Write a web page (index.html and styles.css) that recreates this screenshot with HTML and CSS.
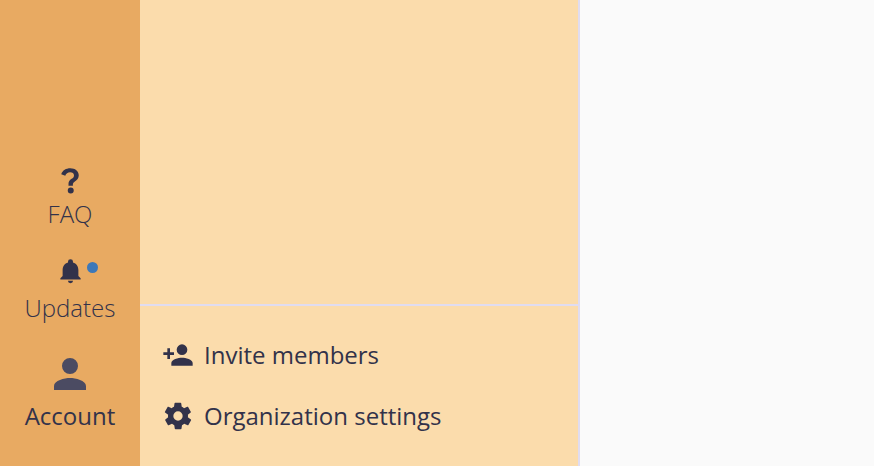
FILE: index.html
```html
<!DOCTYPE html>
<html lang="en">
<head>
<meta charset="utf-8">
<title>Organization menu</title>
<link rel="stylesheet" href="styles.css">
</head>
<body>
<div class="app">
  <nav class="rail">
    <a class="rail-item faq">
      <svg viewBox="0 0 24 24" width="30" height="30"><path class="ink" d="M10.800 16.600h3.500v-1c0-1 .4-1.600 1.600-2.400 1.800-1.200 3.100-2.600 3.100-5 0-3.500-2.900-5.700-6.800-5.700-3.300 0-6.200 1.600-7.200 4.800l3.200 1.300c.6-1.800 2-2.800 3.900-2.800 1.800 0 3.100 1 3.100 2.500 0 1.200-.7 1.900-1.900 2.700-1.700 1.100-2.500 2.200-2.500 3.900zM12.600 18a2.400 2.400 0 1 0 0 4.800 2.400 2.400 0 0 0 0-4.800z"/></svg>
      <span class="light">FAQ</span>
    </a>
    <a class="rail-item updates">
      <span class="bell">
        <svg viewBox="0 0 24 24" width="27" height="27"><path class="ink" d="M12 22.500a2.300 2.300 0 0 0 2.300-2.200H9.700a2.300 2.300 0 0 0 2.300 2.200zM19 16v-5.300c0-3.300-1.800-6-4.800-6.700v-.8a2.200 2.200 0 0 0-4.400 0V4c-3 .7-4.800 3.400-4.800 6.700V16l-2 2v1h18v-1z"/></svg>
        <i class="dot"></i>
      </span>
      <span class="light">Updates</span>
    </a>
    <a class="rail-item account">
      <svg viewBox="0 0 24 24" width="48" height="48"><path class="ink-soft" d="M12 12a4 4 0 1 0 0-8 4 4 0 0 0 0 8zm0 2c-2.700 0-8 1.300-8 4v2h16v-2c0-2.700-5.300-4-8-4z"/></svg>
      <span>Account</span>
    </a>
  </nav>
  <section class="panel">
    <div class="panel-top"></div>
    <ul class="menu">
      <li class="menu-item">
        <span class="menu-icon"><svg viewBox="0 0 24 24" width="32" height="32"><path class="ink" d="M15 12a4 4 0 1 0 0-8 4 4 0 0 0 0 8zm-9-2V7H4v3H1v2h3v3h2v-3h3v-2zm9 4c-2.700 0-8 1.300-8 4v2h16v-2c0-2.700-5.300-4-8-4z"/></svg></span>
        <span>Invite members</span>
      </li>
      <li class="menu-item">
        <span class="menu-icon"><svg viewBox="0 0 24 24" width="32" height="32"><path class="ink" d="M19.400 13c0-.3.100-.6.100-1s0-.7-.1-1l2.100-1.600c.2-.2.200-.4.100-.6l-2-3.500c-.1-.2-.4-.3-.6-.2l-2.500 1c-.5-.4-1.100-.7-1.700-1l-.4-2.700c0-.2-.2-.4-.5-.4h-4c-.2 0-.5.200-.5.400l-.4 2.700c-.6.300-1.200.6-1.700 1l-2.500-1c-.2-.1-.5 0-.6.200l-2 3.500c-.1.200-.1.400.1.600L4.600 11c0 .3-.1.600-.1 1s0 .7.100 1l-2.100 1.600c-.2.200-.2.400-.1.600l2 3.500c.1.200.4.300.6.200l2.500-1c.5.400 1.100.7 1.700 1l.4 2.700c0 .2.300.4.500.4h4c.3 0 .5-.2.500-.4l.4-2.700c.6-.3 1.200-.6 1.700-1l2.500 1c.2.100.5 0 .6-.2l2-3.500c.1-.2.100-.4-.1-.6zM12 15.500a3.500 3.500 0 1 1 0-7 3.500 3.500 0 0 1 0 7z"/></svg></span>
        <span>Organization settings</span>
      </li>
    </ul>
  </section>
  <main class="content"></main>
</div>
</body>
</html>
```
FILE: styles.css
```css
html, body {
  margin: 0;
  height: 100%;
  overflow: hidden;
}
body {
  font-family: "Open Sans", "Noto Sans", sans-serif;
  color: #32324a;
}
.app {
  display: flex;
  height: 466px;
  background: #fafafa;
}
.rail {
  width: 140px;
  flex: none;
  background: #e8aa62;
  display: flex;
  flex-direction: column;
  justify-content: flex-end;
  align-items: center;
  padding-bottom: 34px;
}
.rail-item {
  display: flex;
  flex-direction: column;
  align-items: center;
  font-size: 24px;
  line-height: 32px;
}
.rail-item svg {
  display: block;
}
.faq {
  gap: 3px;
  margin-bottom: 28px;
}
.updates {
  margin-bottom: 26px;
}
.account {
  gap: 2px;
}
.light {
  font-weight: 300;
}
.bell {
  position: relative;
  display: block;
  height: 34px;
}
.dot {
  position: absolute;
  left: 30px;
  top: 4px;
  width: 11px;
  height: 11px;
  border-radius: 50%;
  background: #3d78b8;
}
.ink {
  fill: #32324a;
}
.ink-soft {
  fill: #4b4b62;
}
.panel {
  width: 438px;
  flex: none;
  background: #fbdcac;
  border-right: 2px solid #e0dcf0;
  display: flex;
  flex-direction: column;
}
.panel-top {
  height: 304px;
  flex: none;
  border-bottom: 2px solid #e0dcf0;
}
.menu {
  list-style: none;
  margin: 0;
  padding: 18px 0 0 16px;
}
.menu-item {
  display: flex;
  align-items: center;
  gap: 4px;
  height: 61px;
  font-size: 24px;
}
.menu-icon {
  width: 44px;
  display: flex;
  justify-content: center;
  flex: none;
}
.menu-icon svg {
  display: block;
}
```
